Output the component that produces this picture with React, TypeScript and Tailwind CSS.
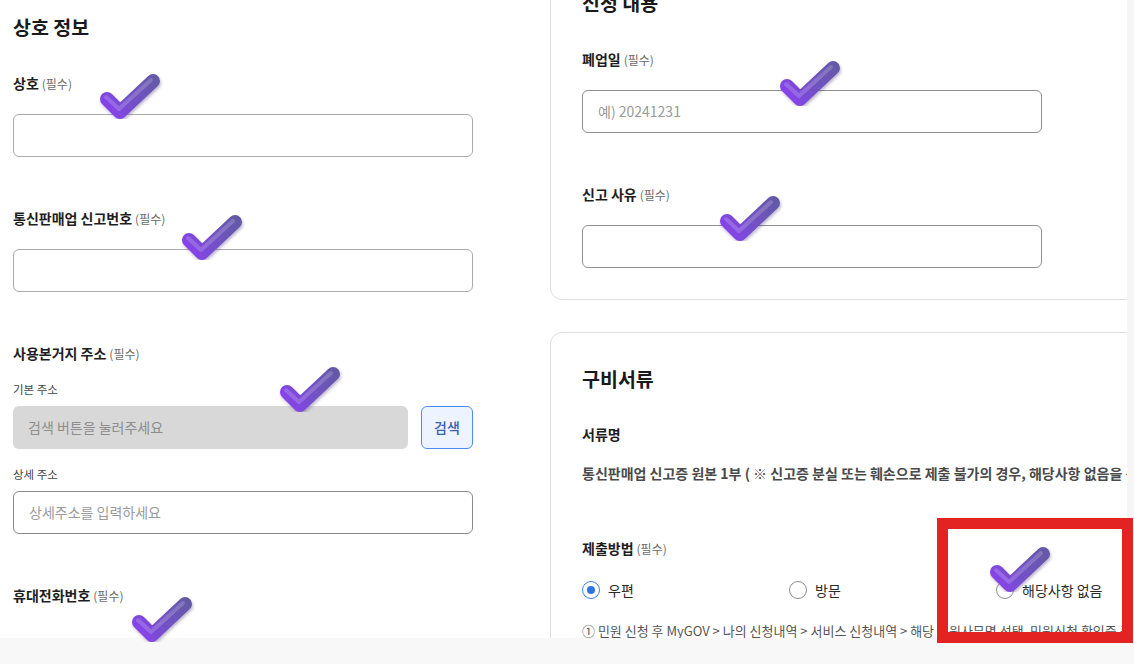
import React from "react";

function Check({ x, y, id }: { x: number; y: number; id: string }) {
  return (
    <svg
      className="absolute pointer-events-none"
      style={{ left: x - 3, top: y - 2 }}
      width={66}
      height={50}
      viewBox="0 0 66 50"
    >
      <defs>
        <linearGradient id={`g${id}`} x1="8" y1="44" x2="60" y2="6" gradientUnits="userSpaceOnUse">
          <stop offset="0" stopColor="#8b3ff2" />
          <stop offset="0.45" stopColor="#7450c8" />
          <stop offset="1" stopColor="#645aa6" />
        </linearGradient>
        <filter id={`f${id}`} x="-20%" y="-20%" width="140%" height="140%">
          <feDropShadow dx="1" dy="2" stdDeviation="1.5" floodColor="#3a2a70" floodOpacity="0.35" />
        </filter>
      </defs>
      <g filter={`url(#f${id})`}>
        <path d="M10 27 L23 40 L56 9" fill="none" stroke={`url(#g${id})`} strokeWidth={14} strokeLinecap="round" strokeLinejoin="round" />
        <path d="M9 25 L22 37 L54 8" fill="none" stroke="#ffffff" strokeOpacity={0.18} strokeWidth={4} strokeLinecap="round" strokeLinejoin="round" />
      </g>
    </svg>
  );
}

function Label({ text, req = true }: { text: string; req?: boolean }) {
  return (
    <div className="h-[20px] leading-[20px] flex items-baseline gap-[3px]">
      <span className="text-[14px] font-bold text-[#1e1e1e]">{text}</span>
      {req && <span className="text-[12px] text-[#6b6b6b]">(필수)</span>}
    </div>
  );
}

function Input({ placeholder, border = "border-[#ababab]" }: { placeholder?: string; border?: string }) {
  return (
    <div className={`h-[43px] w-full rounded-[6px] border ${border} bg-white flex items-center px-[15px]`}>
      <span className="text-[14px] text-[#9a9a9a]">{placeholder}</span>
    </div>
  );
}

function Radio({ label, checked = false }: { label: string; checked?: boolean }) {
  return (
    <div className="flex items-center gap-[8px] w-[207px] shrink-0">
      {checked ? (
        <span className="w-[18px] h-[18px] rounded-full border-[1.5px] border-[#3d80ea] flex items-center justify-center">
          <span className="w-[8px] h-[8px] rounded-full bg-[#2f74e4]" />
        </span>
      ) : (
        <span className="w-[18px] h-[18px] rounded-full border-[1.5px] border-[#8c8c8c] bg-white" />
      )}
      <span className="text-[14px] text-[#2a2a2a]">{label}</span>
    </div>
  );
}

export default function App() {
  return (
    <div className="relative w-[1134px] h-[664px] overflow-hidden bg-white font-[family-name:Noto_Sans_CJK_KR,Noto_Sans,sans-serif]">
      <div className="flex h-full">
        <div className="w-[1127px] h-full overflow-hidden flex">
          {/* Left column */}
          <div className="w-[460px] ml-[13px] pt-[13px] flex flex-col shrink-0">
            <h2 className="text-[19.5px] leading-[28px] font-bold text-[#1a1a1a]">상호 정보</h2>
            <div className="mt-[32px]">
              <Label text="상호" />
              <div className="mt-[21px]">
                <Input />
              </div>
            </div>
            <div className="mt-[51px]">
              <Label text="통신판매업 신고번호" />
              <div className="mt-[21px]">
                <Input />
              </div>
            </div>
            <div className="mt-[51px]">
              <Label text="사용본거지 주소" />
              <div className="mt-[17px] h-[18px] leading-[18px] text-[11.5px] text-[#444]">기본 주소</div>
              <div className="mt-[8px] flex gap-[13px]">
                <div className="flex-1 h-[43px] rounded-[6px] bg-[#d8d8d8] flex items-center px-[15px]">
                  <span className="text-[14px] text-[#8d8d8d]">검색 버튼을 눌러주세요</span>
                </div>
                <button className="w-[52px] h-[43px] rounded-[6px] border border-[#4d8bf0] bg-[#eef4ff] text-[14px] font-medium text-[#3b62a8]">
                  검색
                </button>
              </div>
              <div className="mt-[16px] h-[18px] leading-[18px] text-[11.5px] text-[#444]">상세 주소</div>
              <div className="mt-[8px]">
                <Input placeholder="상세주소를 입력하세요" border="border-[#8a8a8a]" />
              </div>
            </div>
            <div className="mt-[51px]">
              <Label text="휴대전화번호" />
            </div>
          </div>

          {/* Right column */}
          <div className="ml-[77px] w-[620px] shrink-0 flex flex-col">
            <div className="-mt-[44px] rounded-[12px] border border-[#dedede] pl-[31px] pr-[32px] pt-[32px] pb-[31px]">
              <h2 className="text-[19.5px] leading-[28px] font-bold text-[#1a1a1a]">신청 내용</h2>
              <div className="w-[460px]">
                <div className="mt-[32px]">
                  <Label text="폐업일" />
                  <div className="mt-[21px]">
                    <Input placeholder="예) 20241231" border="border-[#8f8f8f]" />
                  </div>
                </div>
                <div className="mt-[51px]">
                  <Label text="신고 사유" />
                  <div className="mt-[21px]">
                    <Input border="border-[#8f8f8f]" />
                  </div>
                </div>
              </div>
            </div>

            <div className="mt-[32px] rounded-[12px] border border-[#dedede] pl-[31px] pr-[32px] pt-[32px] pb-[40px]">
              <h2 className="text-[19.5px] leading-[28px] font-bold text-[#1a1a1a]">구비서류</h2>
              <div className="mt-[31px]">
                <Label text="서류명" req={false} />
              </div>
              <div className="mt-[19px] h-[20px] leading-[20px] whitespace-nowrap text-[14px] font-semibold text-[#4a4a4a]">
                통신판매업 신고증 원본 1부 ( ※ 신고증 분실 또는 훼손으로 제출 불가의 경우, 해당사항 없음을 선택하세요 )
              </div>
              <div className="mt-[55px]">
                <Label text="제출방법" />
              </div>
              <div className="mt-[22px] flex items-center h-[20px]">
                <Radio label="우편" checked />
                <Radio label="방문" />
                <Radio label="해당사항 없음" />
              </div>
              <div className="mt-[22px] h-[18px] leading-[18px] whitespace-nowrap text-[13px] text-[#555]">
                ① 민원 신청 후 MyGOV &gt; 나의 신청내역 &gt; 서비스 신청내역 &gt; 해당 민원사무명 선택, 민원신청 확인증 출력
              </div>
            </div>
          </div>
        </div>
        <div className="flex-1 h-full bg-[#f6f6f6]" />
      </div>

      {/* bottom strip */}
      <div className="absolute left-0 right-0 bottom-0 h-[26px] bg-[#f8f8f8]" />

      {/* red highlight box */}
      <div className="absolute left-[937px] top-[518px] w-[196px] h-[125px] border-[11px] border-[#e32222]" />

      {/* annotation checks */}
      <Check id="1" x={100} y={74} />
      <Check id="2" x={182} y={215} />
      <Check id="3" x={280} y={367} />
      <Check id="4" x={132} y={597} />
      <Check id="5" x={780} y={61} />
      <Check id="6" x={720} y={196} />
      <Check id="7" x={990} y={547} />
    </div>
  );
}
